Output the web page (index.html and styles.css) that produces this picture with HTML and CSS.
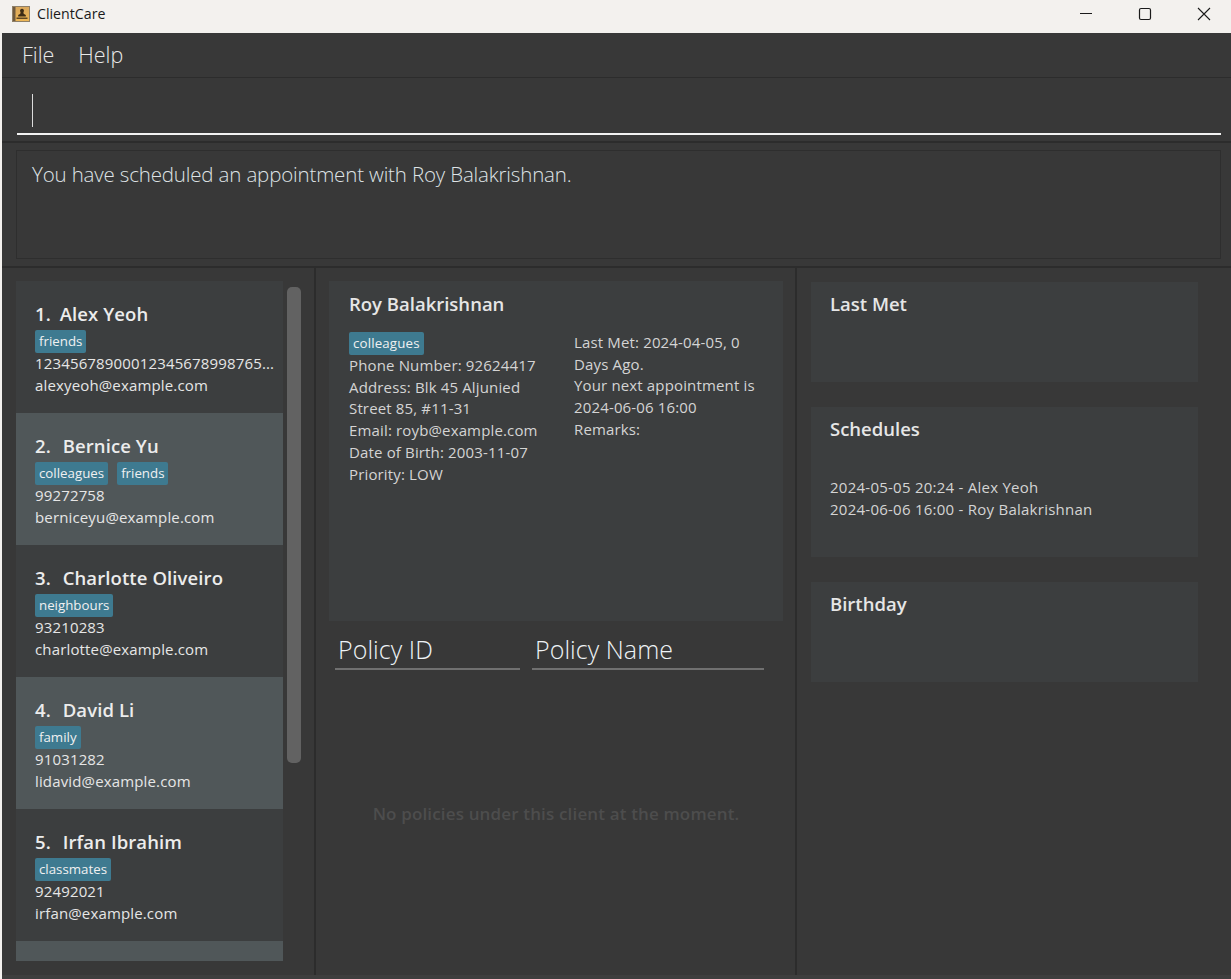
FILE: index.html
```html
<!DOCTYPE html>
<html lang="en">
<head>
<meta charset="utf-8">
<title>ClientCare</title>
<link rel="stylesheet" href="styles.css">
</head>
<body>
<div class="window">
  <header class="titlebar">
    <svg class="app-icon" width="18" height="16" viewBox="0 0 18 16"><defs><linearGradient id="gold" x1="0" y1="0" x2="0" y2="1"><stop offset="0" stop-color="#d9a75c"/><stop offset="1" stop-color="#eeb755"/></linearGradient></defs><rect x="0.5" y="0.5" width="17" height="15" fill="url(#gold)" stroke="#8f8068"/><rect x="1" y="1" width="2.500" height="14" fill="#6e5a40"/><path d="M10 2.800a2 2 0 0 1 1.700 3c-.4.7-.3 1.800.3 2.300l1.800.8V10.500H6.200V8.900L8 8.100c.6-.5.700-1.600.3-2.300a2 2 0 0 1 1.700-3z" fill="#3d2c16"/><rect x="4.500" y="11.500" width="11" height="1.500" fill="#5f4826"/></svg>
    <span class="app-title">ClientCare</span>
    <div class="win-controls">
      <svg class="win-btn" width="14" height="14" viewBox="0 0 14 14"><path d="M1 6.500H13" stroke="#1a1a1a" stroke-width="1"/></svg>
      <svg class="win-btn" width="14" height="14" viewBox="0 0 14 14"><rect x="1.500" y="1.500" width="11" height="11" rx="1.500" fill="none" stroke="#1a1a1a" stroke-width="1.200"/></svg>
      <svg class="win-btn" width="14" height="14" viewBox="0 0 14 14"><path d="M1 1L13 13M13 1L1 13" stroke="#1a1a1a" stroke-width="1.100"/></svg>
    </div>
  </header>
  <nav class="menubar"><span>File</span><span>Help</span></nav>
  <section class="command"><div class="command-field"><span class="caret"></span></div></section>
  <section class="result"><div class="result-box">You have scheduled an appointment with Roy Balakrishnan.</div></section>
  <main class="panes">
    <div class="pane pane-list">
      <div class="list">
        <article class="person">
          <h2><span class="num one">1.</span>&nbsp; Alex Yeoh</h2>
          <div class="tags"><span class="tag">friends</span></div>
          <p>12345678900012345678998765...</p>
          <p>alexyeoh@example.com</p>
        </article>
        <article class="person alt">
          <h2><span class="num">2.</span>&nbsp; Bernice Yu</h2>
          <div class="tags"><span class="tag">colleagues</span><span class="tag">friends</span></div>
          <p>99272758</p>
          <p>berniceyu@example.com</p>
        </article>
        <article class="person">
          <h2><span class="num">3.</span>&nbsp; Charlotte Oliveiro</h2>
          <div class="tags"><span class="tag">neighbours</span></div>
          <p>93210283</p>
          <p>charlotte@example.com</p>
        </article>
        <article class="person alt">
          <h2><span class="num">4.</span>&nbsp; David Li</h2>
          <div class="tags"><span class="tag">family</span></div>
          <p>91031282</p>
          <p>lidavid@example.com</p>
        </article>
        <article class="person">
          <h2><span class="num">5.</span>&nbsp; Irfan Ibrahim</h2>
          <div class="tags"><span class="tag">classmates</span></div>
          <p>92492021</p>
          <p>irfan@example.com</p>
        </article>
        <div class="person-peek"></div>
      </div>
      <div class="scrollbar"><div class="thumb"></div></div>
    </div>
    <div class="pane pane-detail">
      <section class="detail-card">
        <h2>Roy Balakrishnan</h2>
        <div class="detail-cols">
          <div class="detail-col">
            <div class="tags"><span class="tag">colleagues</span></div>
            <p>Phone Number: 92624417</p>
            <p>Address: Blk 45 Aljunied Street 85, #11-31</p>
            <p>Email: royb@example.com</p>
            <p>Date of Birth: 2003-11-07</p>
            <p>Priority: LOW</p>
          </div>
          <div class="detail-col">
            <p>Last Met: 2024-04-05, 0 Days Ago.</p>
            <p>Your next appointment is 2024-06-06 16:00</p>
            <p>Remarks:</p>
          </div>
        </div>
      </section>
      <div class="policy-head"><span class="col-id">Policy ID</span><span class="col-name">Policy Name</span></div>
      <div class="policy-empty">No policies under this client at the moment.</div>
    </div>
    <div class="pane pane-side">
      <section class="side-card"><h2>Last Met</h2></section>
      <section class="side-card tall"><h2>Schedules</h2>
        <div class="schedule"><p>2024-05-05 20:24 - Alex Yeoh</p><p>2024-06-06 16:00 - Roy Balakrishnan</p></div>
      </section>
      <section class="side-card"><h2>Birthday</h2></section>
    </div>
  </main>
</div>
</body>
</html>
```
FILE: styles.css
```css
* { box-sizing: border-box; }
html, body { margin: 0; padding: 0; }
body { width: 1231px; height: 979px; overflow: hidden; background: #f3f1ee; font-family: "Open Sans", "Noto Sans", sans-serif; color: #dcdcdc; }
h2, p { margin: 0; font-weight: normal; }
.window { height: 979px; display: flex; flex-direction: column; }
.titlebar { height: 33px; flex: none; display: flex; align-items: center; padding: 0 0 5px 12px; background: #f3f1ee; color: #1a1a1a; }
.app-icon { flex: none; }
.app-title { margin-left: 7px; font-size: 14.200px; line-height: 20px; }
.win-controls { margin-left: auto; display: flex; align-items: center; gap: 45px; padding-right: 20px; }
.win-btn { display: block; }
.menubar { margin-left: 2px; height: 45px; flex: none; background: #383838; border-bottom: 1px solid #2c2c2c; padding: 0 0 2px 20px; display: flex; align-items: center; gap: 24px; font-size: 21.500px; font-weight: 300; color: #e8e8e8; }
.command { margin-left: 2px; height: 65px; flex: none; background: #383838; border-bottom: 2px solid #2c2c2c; padding: 0 10px 6px 15px; display: flex; align-items: flex-end; }
.command-field { flex: 1; height: 41px; border-bottom: 2px solid #f2f2f2; padding: 0 0 6px 15px; }
.caret { display: block; width: 1px; height: 33px; background: #dcdcdc; }
.result { margin-left: 2px; height: 125px; flex: none; background: #383838; border-bottom: 2px solid #2c2c2c; padding: 7px 10px 7px 14px; }
.result-box { height: 109px; border: 1px solid #2e2e2e; padding: 8px 15px; font-size: 20.500px; line-height: 30px; font-weight: 300; color: #dfe3e6; letter-spacing: -0.16px; }
.panes { margin-left: 2px; flex: 1; min-height: 0; display: flex; background: #383838; border-bottom: 4px solid #3e3e3e; }
.pane { height: 100%; }
.pane-list { width: 314px; flex: none; border-right: 2px solid #2c2c2c; padding: 13px 12px 13px 14px; display: flex; gap: 4px; }
.list { width: 267px; flex: none; height: 680px; overflow: hidden; }
.person { height: 132px; background: #3c3e3f; padding: 20px 0 0 19px; overflow: hidden; }
.person.alt { background: #505759; }
.person h2 { font-size: 18.500px; line-height: 26px; font-weight: 600; color: #ececec; letter-spacing: 0.1px; white-space: nowrap; }
.num { margin-right: 2px; }
.num.one { margin-right: -1px; }
.person p { font-size: 15px; line-height: 22px; color: #e6e6e6; letter-spacing: 0.15px; white-space: nowrap; }
.person-peek { height: 20px; background: #505759; }
.tags { display: flex; gap: 9px; height: 22px; margin-bottom: 1px; align-items: center; }
.person .tags { margin: 3px 0 0; }
.tag { display: block; height: 23px; line-height: 22px; padding: 0 4px; background: #3e7a90; border-radius: 2px; font-size: 13.300px; color: #f0f0f0; }
.scrollbar { width: 14px; height: 680px; }
.thumb { margin-top: 6px; height: 476px; background: #626262; border-radius: 5px; }
.pane-detail { width: 481px; flex: none; border-right: 2px solid #2c2c2c; padding: 13px 12px 0 13px; display: flex; flex-direction: column; }
.detail-card { height: 340px; flex: none; background: #3c3e3f; padding: 10px 20px; }
.detail-card h2 { font-size: 18.500px; line-height: 26px; font-weight: 600; color: #e6e6e6; }
.detail-cols { display: flex; gap: 34px; margin-top: 15px; }
.detail-col { width: 192px; font-size: 15px; line-height: 21.700px; color: #d4d4d4; letter-spacing: 0.15px; }
.detail-col + .detail-col { margin-left: 2px; }
.policy-head { margin-top: 11px; padding: 0 6px; display: flex; gap: 12px; font-size: 25px; line-height: 35px; font-weight: 300; color: #eef3f6; letter-spacing: 0.05px; }
.col-id, .col-name { display: block; padding: 0 0 1px 3px; border-bottom: 2px solid #707070; }
.col-id { width: 185px; }
.col-name { width: 232px; }
.policy-empty { margin-top: 132px; text-align: center; font-size: 17px; line-height: 24px; font-weight: 600; color: #4d4d4d; letter-spacing: 0.15px; }
.pane-side { flex: 1; padding: 14px 33px 0 14px; display: flex; flex-direction: column; gap: 25px; }
.side-card { height: 100px; flex: none; background: #3c3e3f; padding: 9px 19px; }
.side-card.tall { height: 150px; }
.side-card h2 { font-size: 18.500px; line-height: 26px; font-weight: 600; color: #e6e6e6; }
.schedule { margin-top: 34px; font-size: 15px; line-height: 22px; color: #d4d4d4; letter-spacing: 0.25px; }
```
